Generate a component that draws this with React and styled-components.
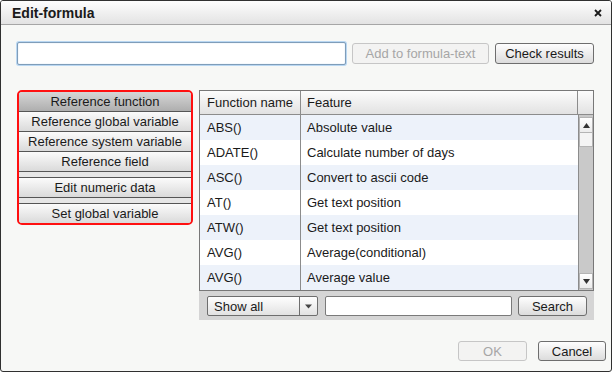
import styled, { createGlobalStyle } from 'styled-components';

const GlobalStyle = createGlobalStyle`
  html, body { margin: 0; padding: 0; background: #ffffff; }
  body {
    font-family: "Liberation Sans", Arial, sans-serif;
    font-size: 13px;
    color: #1e1e1e;
  }
  * { box-sizing: border-box; }
`;

const functions = [
    ['ABS()', 'Absolute value'],
    ['ADATE()', 'Calculate number of days'],
    ['ASC()', 'Convert to ascii code'],
    ['AT()', 'Get text position'],
    ['ATW()', 'Get text position'],
    ['AVG()', 'Average(conditional)'],
    ['AVG()', 'Average value'],
];

const navGroups = [
    ['Reference function', 'Reference global variable', 'Reference system variable', 'Reference field'],
    ['Edit numeric data'],
    ['Set global variable'],
];

function App() {
    return (
        <>
            <GlobalStyle />
            <Window>
                <TitleBar>
                    <span>Edit-formula</span>
                    <CloseIcon viewBox='0 0 8 8'>
                        <path d='M1 1 L7 7 M7 1 L1 7' stroke='#1a1a1a' strokeWidth='1.8' />
                    </CloseIcon>
                </TitleBar>

                <Body>
                    <FormulaRow>
                        <FormulaInput />
                        <Button $width={137} disabled>Add to formula-text</Button>
                        <Button $width={99}>Check results</Button>
                    </FormulaRow>

                    <MainRow>
                        <NavPanel>
                            {navGroups.map((group, gi) => (
                                <NavGroup key={gi}>
                                    {gi > 0 && <NavSpacer />}
                                    {group.map((label) => (
                                        <NavItem
                                            key={label}
                                            $selected={label === 'Reference function'}
                                            $last={gi === navGroups.length - 1}>
                                            {label}
                                        </NavItem>
                                    ))}
                                </NavGroup>
                            ))}
                        </NavPanel>

                        <TableArea>
                            <Grid>
                                <HeaderRow>
                                    <HeaderCell $first>Function name</HeaderCell>
                                    <HeaderCell>Feature</HeaderCell>
                                    <HeaderCorner />
                                </HeaderRow>
                                <GridBody>
                                    <Rows>
                                        {functions.map(([name, feature], i) => (
                                            <Row key={i} $alt={i % 2 === 0}>
                                                <Cell $first>{name}</Cell>
                                                <Cell>{feature}</Cell>
                                            </Row>
                                        ))}
                                    </Rows>
                                    <ScrollBar>
                                        <ScrollButton>
                                            <Arrow viewBox='0 0 7 5'>
                                                <path d='M3.5 0 L7 5 L0 5 Z' fill='#333' />
                                            </Arrow>
                                        </ScrollButton>
                                        <Thumb />
                                        <Track />
                                        <ScrollButton>
                                            <Arrow viewBox='0 0 7 5'>
                                                <path d='M0 0 L7 0 L3.5 5 Z' fill='#333' />
                                            </Arrow>
                                        </ScrollButton>
                                    </ScrollBar>
                                </GridBody>
                            </Grid>

                            <SearchBar>
                                <Select>
                                    <SelectText>Show all</SelectText>
                                    <SelectArrow>
                                        <Arrow viewBox='0 0 7 4'>
                                            <path d='M0 0 L7 0 L3.5 4 Z' fill='#444' />
                                        </Arrow>
                                    </SelectArrow>
                                </Select>
                                <SearchInput />
                                <Button $width={69} $height={20}>Search</Button>
                            </SearchBar>
                        </TableArea>
                    </MainRow>

                    <DialogButtons>
                        <Button $width={69} $height={20} disabled>OK</Button>
                        <Button $width={68} $height={20}>Cancel</Button>
                    </DialogButtons>
                </Body>
            </Window>
        </>
    );
}

export default App;

const Window = styled.div`
    width: 612px;
    height: 372px;
    border: 1px solid #303030;
    border-radius: 3px;
    background: #f7f8f6;
    display: flex;
    flex-direction: column;
    overflow: hidden;
`;

const TitleBar = styled.div`
    height: 24px;
    flex: none;
    display: flex;
    align-items: center;
    justify-content: space-between;
    padding: 0 9px 0 11px;
    background: linear-gradient(#fdfdfd, #e3e3e3);
    border-bottom: 1px solid #a6a6a6;
    font-size: 14px;
    font-weight: bold;
    color: #1a1a1a;
`;

const CloseIcon = styled.svg`
    width: 8px;
    height: 8px;
`;

const Body = styled.div`
    flex: 1;
    display: flex;
    flex-direction: column;
    padding: 17px 5px 10px 16px;
`;

const FormulaRow = styled.div`
    display: flex;
    align-items: center;
    gap: 6px;
    height: 23px;
`;

const FormulaInput = styled.input`
    width: 329px;
    height: 23px;
    border: 1px solid #7f9db9;
    border-radius: 2px;
    background: #ffffff;
    box-shadow: 0 0 0 1px #b9d7f2, inset 0 0 1px #9cc4ea;
    outline: none;
`;

const Button = styled.button`
    width: ${(p) => p.$width}px;
    height: ${(p) => p.$height || 21}px;
    padding: 0;
    font-family: "Liberation Sans", Arial, sans-serif;
    font-size: 13px;
    color: #1a1a1a;
    border: 1px solid #6e6e6e;
    border-radius: 3px;
    background: linear-gradient(#fefefe, #dcdcdc);

    &:disabled {
        color: #a6a6a6;
        border-color: #c6c6c6;
        background: #f3f3f2;
    }
`;

const MainRow = styled.div`
    display: flex;
    align-items: flex-start;
    gap: 6px;
    margin-top: 25px;
`;

const NavPanel = styled.div`
    width: 176px;
    border: 2px solid #ff1010;
    border-radius: 5px;
    overflow: hidden;
    background: #e6e6e6;
    display: flex;
    flex-direction: column;
`;

const NavGroup = styled.div`
    display: flex;
    flex-direction: column;
`;

const NavSpacer = styled.div`
    height: 6px;
    border-bottom: 1px solid #555555;
    background: #e6e6e6;
`;

const NavItem = styled.div`
    height: ${(p) => (p.$last ? 19 : 20)}px;
    display: flex;
    align-items: center;
    justify-content: center;
    border-bottom: ${(p) => (p.$last ? 'none' : '1px solid #555555')};
    background: ${(p) =>
        p.$selected ? 'linear-gradient(#d6d6d6, #aeaeae)' : 'linear-gradient(#fbfbfb, #dadada)'};
    color: #1a1a1a;
    white-space: nowrap;
`;

const TableArea = styled.div`
    width: 395px;
    height: 230px;
    background: #d5d5d5;
    display: flex;
    flex-direction: column;
`;

const Grid = styled.div`
    border: 1px solid #787878;
    display: flex;
    flex-direction: column;
    background: #ffffff;
`;

const HeaderRow = styled.div`
    height: 24px;
    display: grid;
    grid-template-columns: 101px 1fr 15px;
    background: linear-gradient(#fcfcfc, #e2e2e2);
    border-bottom: 1px solid #8c8c8c;
`;

const HeaderCell = styled.div`
    display: flex;
    align-items: center;
    padding-left: ${(p) => (p.$first ? 7 : 6)}px;
    border-right: 1px solid #8c8c8c;
    color: #1a1a1a;
`;

const HeaderCorner = styled.div``;

const GridBody = styled.div`
    display: flex;
    height: 175px;
`;

const Rows = styled.div`
    width: 378px;
    display: flex;
    flex-direction: column;
`;

const Row = styled.div`
    height: 25px;
    display: grid;
    grid-template-columns: 101px 1fr;
    background: ${(p) => (p.$alt ? '#edf2fa' : '#ffffff')};
`;

const Cell = styled.div`
    display: flex;
    align-items: center;
    padding-left: ${(p) => (p.$first ? 7 : 6)}px;
    border-right: ${(p) => (p.$first ? '1px solid #8c8c8c' : 'none')};
    color: #1a1a1a;
    white-space: nowrap;
`;

const ScrollBar = styled.div`
    width: 15px;
    border-left: 1px solid #8c8c8c;
    background: #c9c9c9;
    display: flex;
    flex-direction: column;
    padding: 2px 0 1px;
`;

const ScrollButton = styled.div`
    height: 16px;
    display: flex;
    align-items: center;
    justify-content: center;
    background: linear-gradient(#ffffff, #ececec);
    border: 1px solid #b4b4b4;
`;

const Thumb = styled.div`
    height: 14px;
    background: #f4f4f4;
    border: 1px solid #b4b4b4;
    border-top: none;
`;

const Track = styled.div`
    flex: 1;
`;

const Arrow = styled.svg`
    width: 7px;
    height: 5px;
`;

const SearchBar = styled.div`
    display: flex;
    align-items: center;
    padding: 5px 0 0 8px;
`;

const Select = styled.div`
    width: 111px;
    height: 20px;
    display: flex;
    border: 1px solid #6e6e6e;
    border-radius: 2px;
    background: linear-gradient(#fefefe, #e2e2e2);
`;

const SelectText = styled.div`
    flex: 1;
    display: flex;
    align-items: center;
    padding-left: 6px;
    border-right: 1px solid #6e6e6e;
    color: #1a1a1a;
`;

const SelectArrow = styled.div`
    width: 17px;
    display: flex;
    align-items: center;
    justify-content: center;
`;

const SearchInput = styled.input`
    width: 187px;
    height: 20px;
    margin: 0 6px 0 7px;
    border: 1px solid #7a7a7a;
    border-radius: 2px;
    background: #ffffff;
    outline: none;
`;

const DialogButtons = styled.div`
    margin-top: auto;
    display: flex;
    justify-content: flex-end;
    gap: 11px;
`;
